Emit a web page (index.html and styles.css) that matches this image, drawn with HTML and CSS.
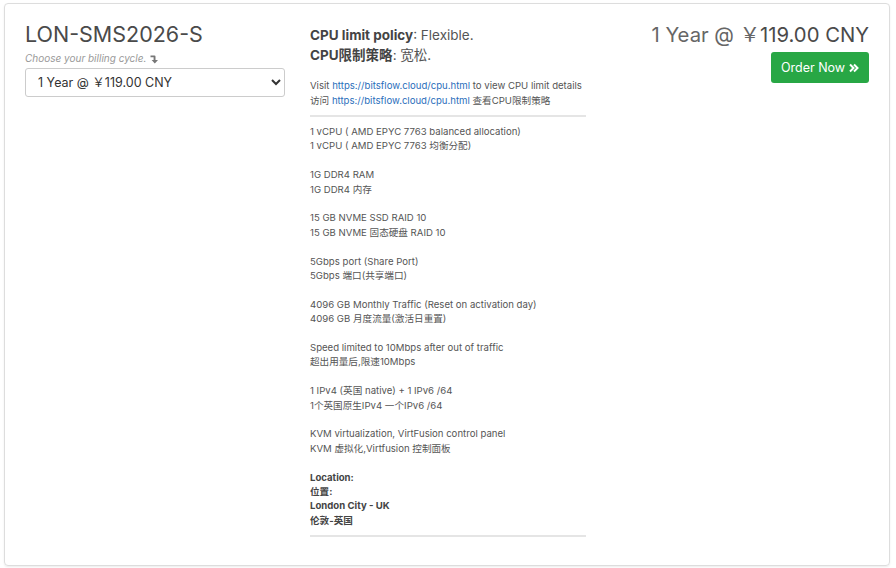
FILE: index.html
```html
<!DOCTYPE html>
<html lang="en">
<head>
<meta charset="utf-8">
<title>LON-SMS2026-S</title>
<link rel="stylesheet" href="styles.css">
</head>
<body>
<div class="page">
  <div class="card">
    <div class="col-left">
      <h1 class="title">LON-SMS2026-S</h1>
      <div class="hint">Choose your billing cycle.
        <svg class="hint-icon" width="9" height="10" viewBox="0 0 9 10"><path d="M0.5 1.5 H4.5 Q5.5 1.5 5.5 2.5 V6 H8 L4.8 9.6 L1.6 6 H3.6 V3.3 H0.5 Z" fill="#777"/></svg>
      </div>
      <select class="cycle">
        <option>1 Year @ ￥119.00 CNY</option>
      </select>
    </div>
    <div class="col-mid">
      <div class="policy"><b>CPU limit policy</b>: Flexible.</div>
      <div class="policy"><b>CPU限制策略</b>: 宽松.</div>
      <div class="visit">
        <p>Visit <a href="#">https://bitsflow.cloud/cpu.html</a> to view CPU limit details</p>
        <p>访问 <a href="#">https://bitsflow.cloud/cpu.html</a> 查看CPU限制策略</p>
      </div>
      <div class="specs">
        <p>1 vCPU ( AMD EPYC 7763 balanced allocation)<br>1 vCPU ( AMD EPYC 7763 均衡分配)</p>
        <p>1G DDR4 RAM<br>1G DDR4 内存</p>
        <p>15 GB NVME SSD RAID 10<br>15 GB NVME 固态硬盘 RAID 10</p>
        <p>5Gbps port (Share Port)<br>5Gbps 端口(共享端口)</p>
        <p>4096 GB Monthly Traffic (Reset on activation day)<br>4096 GB 月度流量(激活日重置)</p>
        <p>Speed limited to 10Mbps after out of traffic<br>超出用量后,限速10Mbps</p>
        <p>1 IPv4 (英国 native) + 1 IPv6 /64<br>1个英国原生IPv4 一个IPv6 /64</p>
        <p>KVM virtualization, VirtFusion control panel<br>KVM 虚拟化,Virtfusion 控制面板</p>
        <p class="loc"><b>Location:<br>位置:<br>London City - UK<br>伦敦-英国</b></p>
      </div>
    </div>
    <div class="col-right">
      <div class="price"><span class="cycle-label">1 Year @ ￥</span><span class="amount">119.00 CNY</span></div>
      <button class="order">Order Now
        <svg width="10" height="10" viewBox="0 0 10 10"><path d="M1 1.5 L4.5 5 L1 8.5 M5 1.5 L8.5 5 L5 8.5" fill="none" stroke="#fff" stroke-width="2"/></svg>
      </button>
    </div>
  </div>
</div>
</body>
</html>
```

FILE: styles.css
```css
* { box-sizing: border-box; }
html, body { margin: 0; padding: 0; background: #fff; }
body {
  font-family: Inter, "Noto Sans CJK SC", sans-serif;
  color: #555;
}
.page { padding: 3px 6px 2px 4px; }
.card {
  border: 1px solid #ddd;
  border-radius: 4px;
  box-shadow: 0 1px 2px rgba(0,0,0,0.08);
  height: 563px;
  padding: 18px 20px 0 20px;
  display: grid;
  grid-template-columns: 260px 276px 1fr;
  column-gap: 25px;
}
.title {
  margin: 0;
  font-size: 21.5px;
  font-weight: 400;
  color: #4a4a4a;
  line-height: 24px;
}
.hint {
  font-size: 10px;
  font-style: italic;
  color: #999;
  margin-top: 5px;
  line-height: 14px;
  display: flex;
  align-items: center;
  gap: 4px;
}
.hint-icon { margin-top: 2px; }
.cycle {
  margin-top: 3px;
  width: 260px;
  height: 29px;
  border: 1px solid #ccc;
  border-radius: 3px;
  background: #fff;
  font-family: Inter, "Noto Sans CJK SC", sans-serif;
  font-size: 12.5px;
  color: #333;
  padding: 0 8px;
}
.col-mid { padding-top: 3px; }
.policy {
  font-size: 13.5px;
  line-height: 20px;
  color: #555;
}
.policy b { color: #444; font-weight: 700; }
.visit {
  margin-top: 13px;
  padding-bottom: 7px;
  border-bottom: 2px solid #e5e5e5;
  font-size: 9.6px;
  line-height: 15px;
}
.visit p { margin: 0; }
.visit a { color: #2a6ebb; text-decoration: none; }
.specs {
  padding-top: 8px;
  padding-bottom: 7px;
  border-bottom: 2px solid #e5e5e5;
  font-size: 9.6px;
  line-height: 14.4px;
}
.specs p { margin: 0 0 14.4px 0; }
.specs p.loc { margin-bottom: 0; }
.specs b { color: #444; }
.col-right {
  display: flex;
  flex-direction: column;
  align-items: flex-end;
}
.price {
  font-size: 20.3px;
  line-height: 26px;
  color: #555;
}
.cycle-label { color: #666; }
.amount { color: #4a4a4a; }
.order {
  margin-top: 4px;
  background: #28a745;
  color: #fff;
  border: none;
  border-radius: 3px;
  height: 31px;
  width: 98px;
  font-family: Inter, sans-serif;
  font-size: 12.5px;
  display: flex;
  align-items: center;
  justify-content: center;
  gap: 4px;
  padding: 0;
}
```
